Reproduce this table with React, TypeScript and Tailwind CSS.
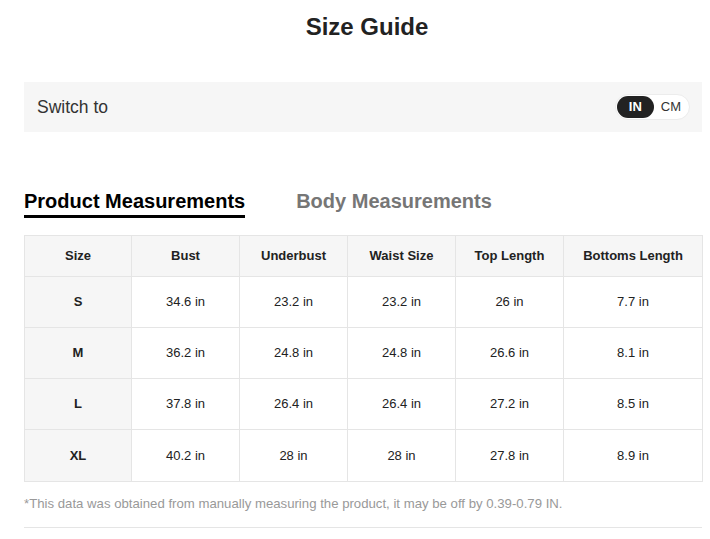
import React from "react";

const headers = ["Size", "Bust", "Underbust", "Waist Size", "Top Length", "Bottoms Length"];
const rows = [
  ["S", "34.6 in", "23.2 in", "23.2 in", "26 in", "7.7 in"],
  ["M", "36.2 in", "24.8 in", "24.8 in", "26.6 in", "8.1 in"],
  ["L", "37.8 in", "26.4 in", "26.4 in", "27.2 in", "8.5 in"],
  ["XL", "40.2 in", "28 in", "28 in", "27.8 in", "8.9 in"],
];
const widths = ["w-[107px]", "w-[108px]", "w-[108px]", "w-[108px]", "w-[108px]", "w-[139px]"];

export default function App() {
  return (
    <div className="w-[710px] bg-white pl-[24px] text-[#222]" style={{ fontFamily: '"Liberation Sans", Arial, sans-serif' }}>
      <div className="flex h-[53px] items-center justify-center">
        <h1 className="text-[24px] font-bold text-[#222]">Size Guide</h1>
      </div>
      <div className="w-[678px]">
        <div className="mt-[29px] flex h-[50px] items-center justify-between bg-[#f6f6f6] pl-[13px] pr-[12px]">
          <span className="text-[17.5px] text-[#333]">Switch to</span>
          <div className="flex h-[26px] items-center rounded-full border border-[#ececec] bg-white p-[1px]">
            <span className="flex h-[22px] items-center rounded-full bg-[#222] px-[12px] text-[13px] font-bold text-white">IN</span>
            <span className="flex h-[22px] items-center px-[7px] text-[13px] text-[#333]">CM</span>
          </div>
        </div>
        <div className="mt-[57px] flex items-end gap-[51px]">
          <div className="flex flex-col">
            <span className="text-[20px] font-bold leading-[24px] text-[#000]">Product Measurements</span>
            <div className="mt-[2px] h-[3px] bg-black" />
          </div>
          <div className="flex flex-col">
            <span className="text-[20px] font-bold leading-[24px] text-[#767676]">Body Measurements</span>
            <div className="mt-[2px] h-[3px]" />
          </div>
        </div>
        <table className="mt-[17px] w-[678px] table-fixed border-collapse text-[13px]">
          <thead>
            <tr className="h-[41px] bg-[#f6f6f6]">
              {headers.map((h, i) => (
                <th key={h} className={`${widths[i]} border border-[#e5e5e5] text-center font-bold text-[#222]`}>
                  {h}
                </th>
              ))}
            </tr>
          </thead>
          <tbody>
            {rows.map((r, ri) => (
              <tr key={r[0]} className={ri === 3 ? "h-[52px]" : "h-[51px]"}>
                {r.map((c, i) => (
                  <td
                    key={i}
                    className={
                      i === 0
                        ? "border border-[#e5e5e5] bg-[#f6f6f6] text-center font-bold text-[#222]"
                        : "border border-[#e5e5e5] text-center text-[#222]"
                    }
                  >
                    {c}
                  </td>
                ))}
              </tr>
            ))}
          </tbody>
        </table>
        <p className="mt-[14px] text-[13.2px] leading-[16px] text-[#999]">
          *This data was obtained from manually measuring the product, it may be off by 0.39-0.79 IN.
        </p>
        <div className="mt-[15px] h-px bg-[#e5e5e5]" />
        <div className="h-[12px]" />
      </div>
    </div>
  );
}
